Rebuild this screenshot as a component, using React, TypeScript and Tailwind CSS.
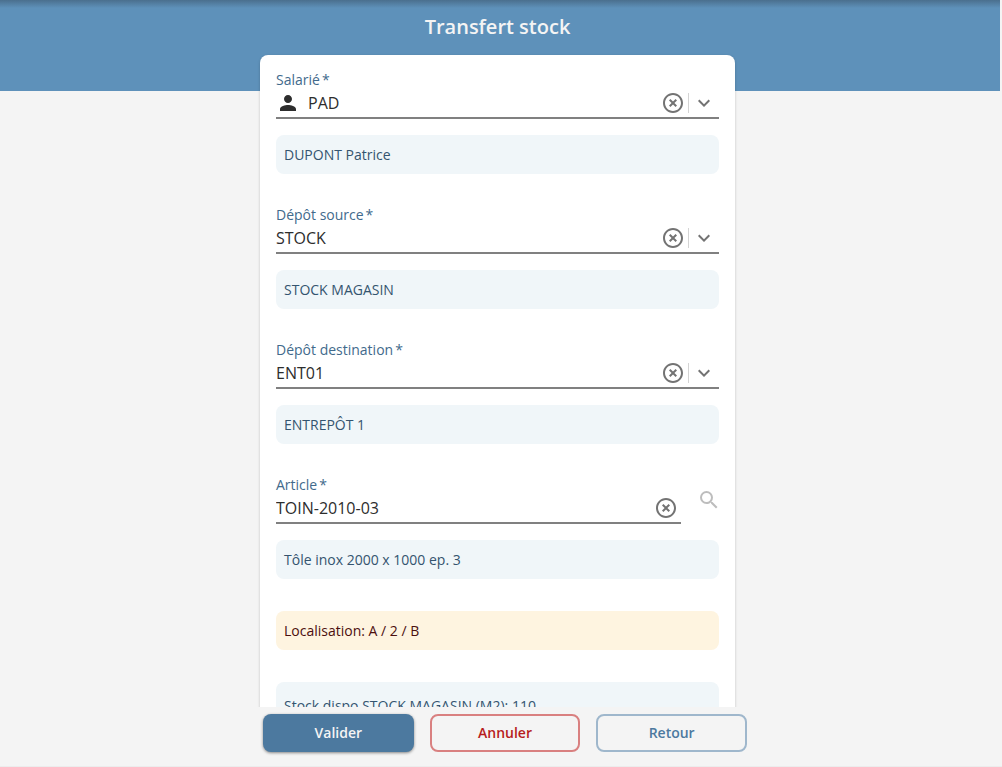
import React from 'react';
import { MdExpandMore, MdHighlightOff, MdPerson, MdSearch } from 'react-icons/md';

const App: React.FC = () => {
  return (
    <div className="flex h-screen flex-col overflow-hidden border-b border-[#ececec] bg-[#f4f4f4] font-['Open_Sans','Noto_Sans',sans-serif]">
      <main className="min-h-0 flex-1 overflow-y-auto pr-0.5 [scrollbar-width:none]">
        <header className="h-[91px] bg-[linear-gradient(#4a6f8e,#5e91ba_8px)] pt-3 pr-[5px] text-center">
          <h1 className="text-xl leading-[30px] font-semibold text-[#f4f4f4]">Transfert stock</h1>
        </header>

        <div className="relative -mt-9 pr-[5px]">
          <form className="mx-auto flex max-w-[475px] flex-col gap-8 rounded-lg bg-white p-4 shadow-[0_1px_3px_rgba(0,0,0,0.2)]">
            <div>
              <SelectField id="salarie" label="Salarié" value="PAD" icon={<MdPerson className="mr-2 size-6 shrink-0" />} />
              <InfoBox>DUPONT Patrice</InfoBox>
            </div>
            <div>
              <SelectField id="depot-source" label="Dépôt source" value="STOCK" />
              <InfoBox>STOCK MAGASIN</InfoBox>
            </div>
            <div>
              <SelectField id="depot-destination" label="Dépôt destination" value="ENT01" />
              <InfoBox>ENTREPÔT 1</InfoBox>
            </div>
            <div>
              <div className="mb-4 flex items-center justify-between">
                <div className="mr-4 flex-1">
                  <FieldLabel id="article">Article</FieldLabel>
                  <div className="flex h-[30px] items-center border-b-2 border-[#808080] pr-[3px]">
                    <input id="article" type="text" defaultValue="TOIN-2010-03" required className="min-w-0 flex-1 bg-transparent text-base text-[#2d2d2d] outline-none" />
                    <ClearButton />
                  </div>
                </div>
                <button type="button" aria-label="Rechercher un article" className="-mr-0.5 text-[#bdbdbd]">
                  <MdSearch className="size-6" />
                </button>
              </div>
              <InfoBox>Tôle inox 2000 x 1000 ep. 3</InfoBox>
            </div>
            <p className="rounded-lg bg-[#fef4e0] px-2 py-2 text-sm leading-[23px] text-[#4c0f0f]">Localisation: A / 2 / B</p>
            <div className="rounded-lg bg-[#f0f6f9] py-1">
              <InfoBox>Stock dispo STOCK MAGASIN (M2): 110</InfoBox>
            </div>
          </form>
        </div>
      </main>

      <footer className="pt-[7px] pb-[14px] pl-2">
        <div className="mx-auto grid max-w-[484px] grid-cols-3 gap-4 text-sm font-semibold">
          <button type="button" className="h-[38px] rounded-lg bg-[#4c799f] text-[#f4f4f4] shadow-[0_1px_3px_rgba(0,0,0,0.45)]">Valider</button>
          <button type="button" className="h-[38px] rounded-lg border-2 border-[#d98080] text-[#b71c1c]">Annuler</button>
          <button type="button" className="h-[38px] rounded-lg border-2 border-[#9fb7cc] text-[#4c799f]">Retour</button>
        </div>
      </footer>
    </div>
  );
};

const FieldLabel: React.FC<{ id: string; children: React.ReactNode }> = ({ id, children }) => (
  <label htmlFor={id} className="flex gap-0.5 text-sm leading-[18px] text-[#426a8c]">
    {children}
    <span>*</span>
  </label>
);

const ClearButton: React.FC = () => (
  <button type="button" aria-label="Effacer" className="shrink-0 text-[#737373]">
    <MdHighlightOff className="size-6" />
  </button>
);

const SelectField: React.FC<{ id: string; label: string; value: string; icon?: React.ReactNode }> = ({ id, label, value, icon }) => (
  <div className="mb-4">
    <FieldLabel id={id}>{label}</FieldLabel>
    <div className="flex h-[30px] items-center border-b-2 border-[#808080] pr-[3px] text-[#2d2d2d]">
      {icon}
      <select id={id} defaultValue={value} required className="min-w-0 flex-1 appearance-none bg-transparent text-base outline-none">
        <option value={value}>{value}</option>
      </select>
      <ClearButton />
      <span className="mx-[3px] h-5 w-px bg-[#d4d4d4]" />
      <MdExpandMore className="size-6 shrink-0 text-[#737373]" />
    </div>
  </div>
);

const InfoBox: React.FC<{ children: React.ReactNode }> = ({ children }) => (
  <p className="rounded-lg bg-[#f0f6f9] px-2 py-2 text-sm leading-[23px] text-[#34546f]">{children}</p>
);

export default App;
